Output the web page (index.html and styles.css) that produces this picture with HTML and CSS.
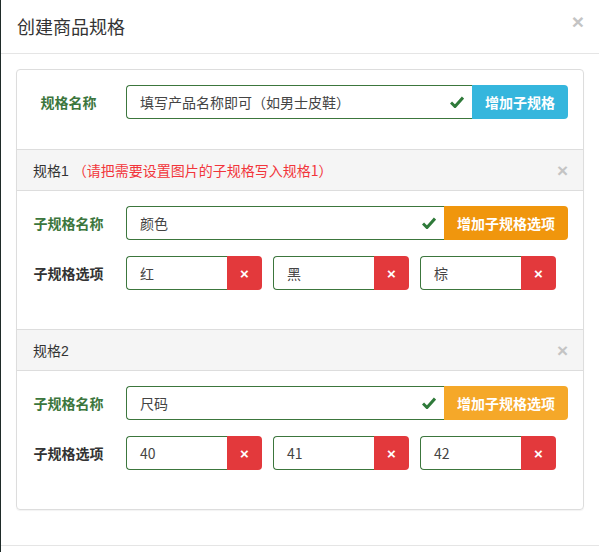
FILE: index.html
```html
<!DOCTYPE html>
<html lang="zh-CN">
<head>
<meta charset="utf-8">
<title>创建商品规格</title>
<link rel="stylesheet" href="styles.css">
</head>
<body>
<div class="modal">
  <div class="modal-header">
    <h4 class="modal-title">创建商品规格</h4>
    <span class="close">×</span>
  </div>
  <div class="modal-body">
    <div class="panel">
      <div class="section-top">
        <div class="row">
          <label class="lbl ok">规格名称</label>
          <div class="input-group">
            <div class="field">填写产品名称即可（如男士皮鞋）
              <svg class="check" viewBox="0 0 14 12" width="14" height="12"><path d="M1 6.5 L5 10.5 L13 1.5" fill="none" stroke="#2f7a3a" stroke-width="3"/></svg>
            </div>
            <button class="btn btn-info">增加子规格</button>
          </div>
        </div>
      </div>

      <div class="sub-head">
        <span>规格1</span><span class="hint">（请把需要设置图片的子规格写入规格1）</span>
        <span class="sub-close">×</span>
      </div>
      <div class="sub-body">
        <div class="row">
          <label class="lbl ok">子规格名称</label>
          <div class="input-group">
            <div class="field">颜色
              <svg class="check" viewBox="0 0 14 12" width="14" height="12"><path d="M1 6.5 L5 10.5 L13 1.5" fill="none" stroke="#2f7a3a" stroke-width="3"/></svg>
            </div>
            <button class="btn btn-warn">增加子规格选项</button>
          </div>
        </div>
        <div class="row">
          <label class="lbl">子规格选项</label>
          <div class="options">
            <div class="opt"><div class="opt-field">红</div><button class="btn-del">×</button></div>
            <div class="opt"><div class="opt-field">黑</div><button class="btn-del">×</button></div>
            <div class="opt"><div class="opt-field">棕</div><button class="btn-del">×</button></div>
          </div>
        </div>
      </div>

      <div class="sub-head">
        <span>规格2</span>
        <span class="sub-close">×</span>
      </div>
      <div class="sub-body">
        <div class="row">
          <label class="lbl ok">子规格名称</label>
          <div class="input-group">
            <div class="field">尺码
              <svg class="check" viewBox="0 0 14 12" width="14" height="12"><path d="M1 6.5 L5 10.5 L13 1.5" fill="none" stroke="#2f7a3a" stroke-width="3"/></svg>
            </div>
            <button class="btn btn-warn light">增加子规格选项</button>
          </div>
        </div>
        <div class="row">
          <label class="lbl">子规格选项</label>
          <div class="options">
            <div class="opt"><div class="opt-field">40</div><button class="btn-del">×</button></div>
            <div class="opt"><div class="opt-field">41</div><button class="btn-del">×</button></div>
            <div class="opt"><div class="opt-field">42</div><button class="btn-del">×</button></div>
          </div>
        </div>
      </div>
    </div>
  </div>
  <div class="modal-footer"></div>
</div>
</body>
</html>
```

FILE: styles.css
```css
* { box-sizing: border-box; }
html, body { margin: 0; padding: 0; }
body {
  background: #1f2b29;
  font-family: "Liberation Sans", "Noto Sans CJK SC", sans-serif;
  font-size: 14px;
  color: #333;
  height: 552px;
  overflow: hidden;
}
.modal {
  margin-left: 1px;
  background: #fff;
  min-height: 552px;
}
.modal-header {
  height: 54px;
  border-bottom: 1px solid #e5e5e5;
  display: flex;
  align-items: center;
  justify-content: space-between;
  padding: 0 15px 2px 16px;
}
.modal-title {
  margin: 0;
  font-size: 18px;
  font-weight: normal;
  color: #333;
  font-family: "Noto Sans CJK SC", sans-serif;
}
.close {
  font-size: 21px;
  font-weight: bold;
  color: #c4c4c4;
  line-height: 1;
  margin-top: -8px;
}
.modal-body {
  padding: 15px 15px 35px 15px;
}
.panel {
  border: 1px solid #ddd;
  border-radius: 4px;
  box-shadow: 0 1px 1px rgba(0,0,0,.05);
  overflow: hidden;
}
.section-top {
  padding: 15px 15px 30px 15px;
}
.row {
  display: flex;
  align-items: center;
  height: 34px;
}
.row + .row { margin-top: 16px; }
.lbl {
  flex: 0 0 73px;
  text-align: center;
  font-weight: bold;
  color: #333;
  margin-right: 21px;
  font-family: "Noto Sans CJK SC", sans-serif;
}
.lbl.ok { color: #3c763d; }
.input-group {
  flex: 1;
  display: flex;
  height: 34px;
}
.field {
  flex: 1;
  border: 1px solid #3c763d;
  border-right: none;
  border-radius: 4px 0 0 4px;
  padding: 0 8px 0 13px;
  display: flex;
  align-items: center;
  justify-content: space-between;
  color: #444;
  font-family: "Noto Sans CJK SC", sans-serif;
}
.check { flex: none; }
.btn {
  border: none;
  border-radius: 0 4px 4px 0;
  color: #fff;
  font-weight: bold;
  font-size: 14px;
  padding: 0 13px;
  font-family: "Noto Sans CJK SC", sans-serif;
}
.btn-info { background: #35b6dd; }
.btn-warn { background: #f0960d; }
.btn-warn.light { background: #f5a829; }
.sub-head {
  background: #f5f5f5;
  border-top: 1px solid #ddd;
  border-bottom: 1px solid #ddd;
  height: 42px;
  padding: 0 15px 0 16px;
  display: flex;
  align-items: center;
  color: #333;
}
.hint {
  color: #f2353b;
  margin-left: 4px;
  font-family: "Noto Sans CJK SC", sans-serif;
}
.sub-close {
  margin-left: auto;
  font-size: 19px;
  font-weight: bold;
  color: #c4c4c4;
  line-height: 1;
  margin-top: 1px;
}
.sub-body {
  padding: 15px 15px 39px 15px;
}
.options {
  display: flex;
  gap: 11px;
}
.opt {
  display: flex;
  width: 136px;
  height: 34px;
}
.opt-field {
  flex: 1;
  border: 1px solid #3c763d;
  border-right: none;
  border-radius: 4px 0 0 4px;
  padding: 0 13px;
  display: flex;
  align-items: center;
  color: #444;
  font-family: "Noto Sans CJK SC", sans-serif;
}
.btn-del {
  width: 35px;
  border: none;
  border-radius: 0 4px 4px 0;
  background: #e3393c;
  color: #fff;
  font-weight: bold;
  font-size: 15px;
  padding: 0;
  font-family: "Liberation Sans", sans-serif;
}
.modal-footer {
  border-top: 1px solid #e5e5e5;
  height: 20px;
}
```
